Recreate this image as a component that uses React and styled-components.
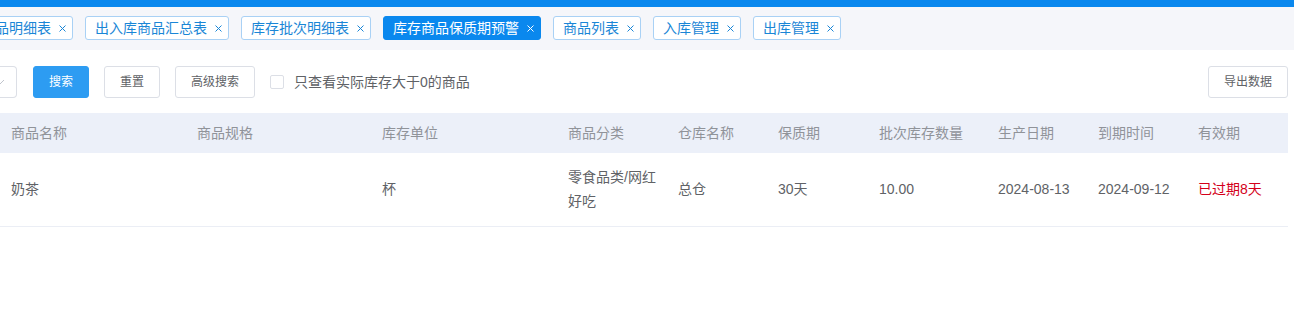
import React from "react";
import styled, { createGlobalStyle } from "styled-components";

const Global = createGlobalStyle`
  html, body { margin: 0; padding: 0; background: #fff; }
  body { font-family: "Liberation Sans", "Noto Sans CJK SC", sans-serif; }
  * { box-sizing: border-box; }
`;

const Page = styled.div`
  width: 1294px;
  overflow: hidden;
`;

const TopBar = styled.div`
  height: 7px;
  background: #0a88ee;
`;

const TagBar = styled.div`
  height: 43px;
  background: #f5f6fa;
  display: flex;
  align-items: center;
  overflow: hidden;
  padding-bottom: 1px;
`;

const TagList = styled.div`
  display: flex;
  gap: 12px;
  margin-left: ${(p) => p.$offset}px;
`;

const Tag = styled.div`
  flex: none;
  height: 24px;
  display: flex;
  align-items: center;
  gap: 8px;
  padding: 0 6px 0 9px;
  border: 1px solid ${(p) => (p.$active ? "#0a88ee" : "#a9d1f5")};
  border-radius: 3px;
  background: ${(p) => (p.$active ? "#0a88ee" : "#fff")};
  color: ${(p) => (p.$active ? "#fff" : "#1a86d6")};
  font-size: 14px;
  line-height: 22px;
  white-space: nowrap;
`;

const Close = styled.svg`
  width: 7px;
  height: 7px;
  flex: none;
`;

const Toolbar = styled.div`
  display: flex;
  align-items: center;
  height: 32px;
  margin-top: 16px;
  padding-right: 6px;
`;

const SelectStub = styled.div`
  width: 17px;
  height: 32px;
  border: 1px solid #dcdfe6;
  border-left: none;
  border-radius: 0 4px 4px 0;
  overflow: hidden;
  display: flex;
  align-items: center;
  justify-content: flex-end;
  padding-right: 10px;
  margin-right: 16px;
  color: #c0c4cc;
`;

const Chevron = styled.svg`
  width: 12px;
  height: 12px;
  flex: none;
`;

const Button = styled.button`
  height: 32px;
  width: ${(p) => p.$w}px;
  margin-right: ${(p) => (p.$last ? 0 : 15)}px;
  padding: 0;
  border: 1px solid ${(p) => (p.$primary ? "#2d9cf2" : "#dcdfe6")};
  background: ${(p) => (p.$primary ? "#2d9cf2" : "#fff")};
  color: ${(p) => (p.$primary ? "#fff" : "#606266")};
  border-radius: 3px;
  font-family: inherit;
  font-size: 12px;
  line-height: 30px;
  cursor: pointer;
`;

const CheckLabel = styled.label`
  display: flex;
  align-items: center;
  gap: 10px;
  font-size: 14px;
  color: #606266;
  line-height: 20px;
`;

const Box = styled.span`
  width: 14px;
  height: 14px;
  border: 1px solid #dcdfe6;
  border-radius: 2px;
  background: #fff;
`;

const Spacer = styled.div`
  flex: 1;
`;

const Table = styled.table`
  margin-top: 15px;
  width: 1288px;
  table-layout: fixed;
  border-collapse: collapse;
  font-size: 14px;
`;

const Th = styled.th`
  height: 40px;
  padding: 0 10px;
  background: #ecf0f9;
  color: #909399;
  font-weight: normal;
  text-align: left;
  line-height: 20px;
  white-space: nowrap;
  &:first-child { padding-left: 11px; }
`;

const Td = styled.td`
  padding: 12px 10px 13px;
  line-height: 24px;
  color: ${(p) => (p.$danger ? "#d4001a" : "#606266")};
  border-bottom: 1px solid #ebeef5;
  vertical-align: middle;
  &:first-child { padding-left: 11px; }
`;

const tags = [
  "库存商品明细表",
  "出入库商品汇总表",
  "库存批次明细表",
  "库存商品保质期预警",
  "商品列表",
  "入库管理",
  "出库管理",
];

const columns = [
  ["商品名称", 187],
  ["商品规格", 185],
  ["库存单位", 186],
  ["商品分类", 110],
  ["仓库名称", 100],
  ["保质期", 101],
  ["批次库存数量", 119],
  ["生产日期", 100],
  ["到期时间", 100],
  ["有效期", 100],
];

const row = [
  "奶茶",
  "",
  "杯",
  "零食品类/网红好吃",
  "总仓",
  "30天",
  "10.00",
  "2024-08-13",
  "2024-09-12",
  "已过期8天",
];

function CloseIcon() {
  return (
    <Close viewBox="0 0 7 7">
      <path d="M0.5 0.5L6.5 6.5M6.5 0.5L0.5 6.5" stroke="currentColor" strokeWidth="1" fill="none" />
    </Close>
  );
}

export default function App() {
  return (
    <Page>
      <Global />
      <TopBar />
      <TagBar>
        <TagList $offset={-57}>
          {tags.map((t, i) => (
            <Tag key={t} $active={i === 3}>
              <span>{t}</span>
              <CloseIcon />
            </Tag>
          ))}
        </TagList>
      </TagBar>
      <Toolbar>
        <SelectStub>
          <Chevron viewBox="0 0 12 12">
            <path d="M2 4l4 4 4-4" stroke="currentColor" strokeWidth="1" fill="none" />
          </Chevron>
        </SelectStub>
        <Button $primary $w={56}>搜索</Button>
        <Button $w={56}>重置</Button>
        <Button $w={80}>高级搜索</Button>
        <CheckLabel>
          <Box />
          只查看实际库存大于0的商品
        </CheckLabel>
        <Spacer />
        <Button $w={80} $last>导出数据</Button>
      </Toolbar>
      <Table>
        <colgroup>
          {columns.map(([n, w]) => (
            <col key={n} style={{ width: w }} />
          ))}
        </colgroup>
        <thead>
          <tr>
            {columns.map(([n]) => (
              <Th key={n}>{n}</Th>
            ))}
          </tr>
        </thead>
        <tbody>
          <tr>
            {row.map((v, i) => (
              <Td key={i} $danger={i === 9}>{v}</Td>
            ))}
          </tr>
        </tbody>
      </Table>
    </Page>
  );
}
